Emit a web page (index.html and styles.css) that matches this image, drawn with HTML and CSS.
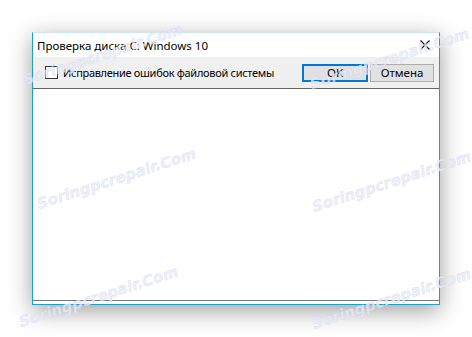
FILE: index.html
```html
<!DOCTYPE html>
<html lang="ru">
<head>
  <meta charset="UTF-8">
  <title>Проверка диска C: Windows 10</title>
  <link rel="stylesheet" href="styles.css">
</head>
<body>
  <div class="window">
    <div class="titlebar">
      <span class="title">Проверка диска C: Windows 10</span>
      <span class="close">
        <svg width="10" height="10" viewBox="0 0 10 10"><path d="M0.5 0.5L9.5 9.5M9.5 0.5L0.5 9.5" stroke="#000" stroke-width="1.1" fill="none"/></svg>
      </span>
    </div>
    <div class="toolbar">
      <label class="check"><span class="box"></span>Исправление ошибок файловой системы</label>
      <div class="buttons">
        <button class="btn default">OK</button>
        <button class="btn">Отмена</button>
      </div>
    </div>
    <div class="content"></div>
    <div class="footer"></div>
  </div>

  <div class="mark m1">Soringpcrepair.Com</div>
  <div class="mark m2">Soringpcrepair.Com</div>
  <div class="mark m3">Soringpcrepair.Com</div>
  <div class="mark m4">Soringpcrepair.Com</div>
  <div class="mark m5">Soringpcrepair.Com</div>
  <div class="mark m6">Soringpcrepair.Com</div>
</body>
</html>
```

FILE: styles.css
```css
* { box-sizing: border-box; margin: 0; padding: 0; }
body { background: #fff; font-family: 'Noto Sans', sans-serif; font-size: 11.5px; color: #000;
  width: 472px; height: 337px; overflow: hidden; position: relative;
}
.window { margin: 32px 0 0 32px; width: 408px; height: 273px;
  border: 1px solid #1ca0c6; border-top-color: #cfe6ef;
  background: #fff; display: flex; flex-direction: column;
  box-shadow: 0 6px 22px rgba(0,0,0,0.38);
}
.titlebar { height: 24px; display: flex; align-items: center; justify-content: space-between;
  padding: 0 9px 0 4px;
}
.title { line-height: 16px; padding-top: 2px; white-space: nowrap; }
.close { display: flex; width: 10px; height: 10px; }
.toolbar { height: 32px; background: #f0f0f0; border-bottom: 1px solid #646464;
  display: flex; align-items: center; justify-content: space-between; padding: 0 5px 0 12px;
}
.check { display: flex; align-items: center; gap: 5px; white-space: nowrap;
  font-size: 11px; letter-spacing: -0.3px;
}
.box { flex-shrink: 0; width: 13px; height: 13px; border: 1px solid #333; background: #fff; }
.buttons { display: flex; gap: 2px; flex-shrink: 0; }
.btn { height: 18px; font-family: inherit; font-size: 11.5px; color: #000;
  background: #e1e1e1; border: 1px solid #adadad; width: 64px; line-height: 14px;
}
.btn.default { width: 66px; border: 2px solid #0078d7; }
.content { flex: 1; background: #fff; }
.footer { height: 4px; border-top: 1px solid #7a7a7a; background: #fff; }
.mark { position: absolute; font-family: 'DejaVu Sans', sans-serif; font-weight: bold; font-style: italic;
  font-size: 15px; color: rgba(232,235,248,0.8); -webkit-text-stroke: 0.4px rgba(150,162,212,0.3);
  transform: rotate(-18deg); transform-origin: left bottom; white-space: nowrap; line-height: 16px;
}
.m1 { left: 26px; top: 72px; }
.m2 { left: 313px; top: 76px; }
.m3 { left: 40px; top: 196px; }
.m4 { left: 315px; top: 199px; }
.m5 { left: 22px; top: 314px; }
.m6 { left: 315px; top: 316px; }
```
